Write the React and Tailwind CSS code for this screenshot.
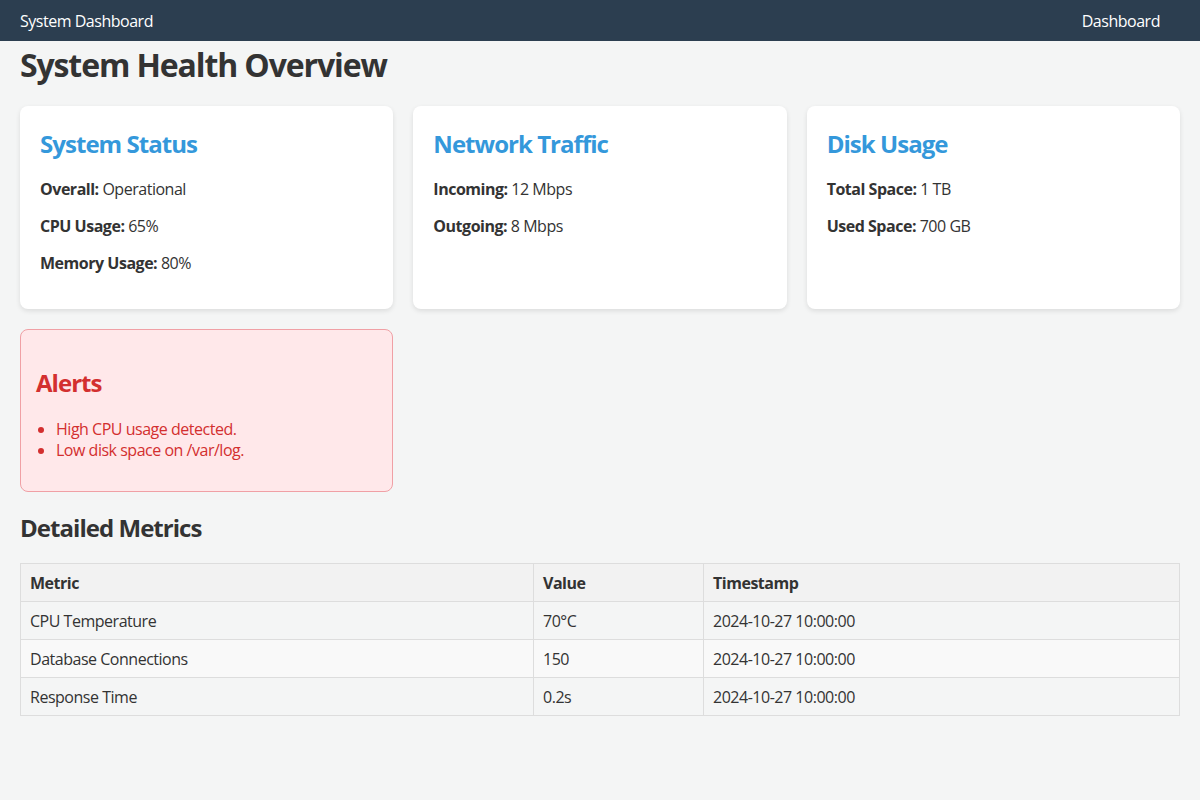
import React from 'react';

const cards = [
  {
    title: 'System Status',
    rows: [
      ['Overall:', 'Operational'],
      ['CPU Usage:', '65%'],
      ['Memory Usage:', '80%'],
    ],
  },
  {
    title: 'Network Traffic',
    rows: [
      ['Incoming:', '12 Mbps'],
      ['Outgoing:', '8 Mbps'],
    ],
  },
  {
    title: 'Disk Usage',
    rows: [
      ['Total Space:', '1 TB'],
      ['Used Space:', '700 GB'],
    ],
  },
];

const metrics = [
  ['CPU Temperature', '70°C', '2024-10-27 10:00:00'],
  ['Database Connections', '150', '2024-10-27 10:00:00'],
  ['Response Time', '0.2s', '2024-10-27 10:00:00'],
];

export default function App() {
  return (
    <div className="min-h-[800px] bg-[#f4f5f5] text-[#333] text-[16px] tracking-[-0.03em] font-['Segoe_UI','Open_Sans',sans-serif]">
      <nav className="h-[41px] bg-[#2c3e50] text-white flex items-center justify-between pl-5 pr-10">
        <span>System Dashboard</span>
        <span>Dashboard</span>
      </nav>

      <main className="px-5">
        <h1 className="text-[32px] font-bold leading-[42px] mt-[3px] tracking-[-0.035em]">System Health Overview</h1>

        <div className="grid grid-cols-3 gap-5 mt-[20px]">
          {cards.map((card) => (
            <div key={card.title} className="bg-white rounded-lg shadow-[0_2px_5px_rgba(0,0,0,0.1)] px-5 pt-[22px] pb-[35px]">
              <h2 className="text-[24px] font-bold text-[#3498db] leading-[32px] tracking-[-0.04em]">{card.title}</h2>
              <div className="mt-[19px] flex flex-col gap-4">
                {card.rows.map(([label, value]) => (
                  <p key={label} className="leading-[21px]">
                    <strong>{label}</strong> {value}
                  </p>
                ))}
              </div>
            </div>
          ))}

          <div className="bg-[#ffe8ea] border border-[#f0a0a5] rounded-lg px-[15px] pt-[37px] pb-[30px] text-[#d32f2f]">
            <h2 className="text-[24px] font-bold leading-[32px] tracking-[-0.04em]">Alerts</h2>
            <ul className="list-disc pl-5 mt-[20px] leading-[21px]">
              <li>High CPU usage detected.</li>
              <li>Low disk space on /var/log.</li>
            </ul>
          </div>
        </div>

        <h2 className="text-[24px] font-bold leading-[32px] mt-[20px] tracking-[-0.04em]">Detailed Metrics</h2>

        <table className="w-full border-collapse mt-[19px]">
          <thead>
            <tr className="bg-[#f2f2f2]">
              <th className="w-[513px] border border-[#ddd] px-[9px] pt-[9px] pb-[7px] text-left font-bold leading-[21px]">Metric</th>
              <th className="w-[170px] border border-[#ddd] px-[9px] pt-[9px] pb-[7px] text-left font-bold leading-[21px]">Value</th>
              <th className="border border-[#ddd] px-[9px] pt-[9px] pb-[7px] text-left font-bold leading-[21px]">Timestamp</th>
            </tr>
          </thead>
          <tbody>
            {metrics.map((row, i) => (
              <tr key={row[0]} className={i % 2 === 1 ? 'bg-[#f9f9f9]' : ''}>
                {row.map((cell, j) => (
                  <td key={j} className="border border-[#ddd] px-[9px] pt-[9px] pb-[7px] leading-[21px]">{cell}</td>
                ))}
              </tr>
            ))}
          </tbody>
        </table>
      </main>
    </div>
  );
}
